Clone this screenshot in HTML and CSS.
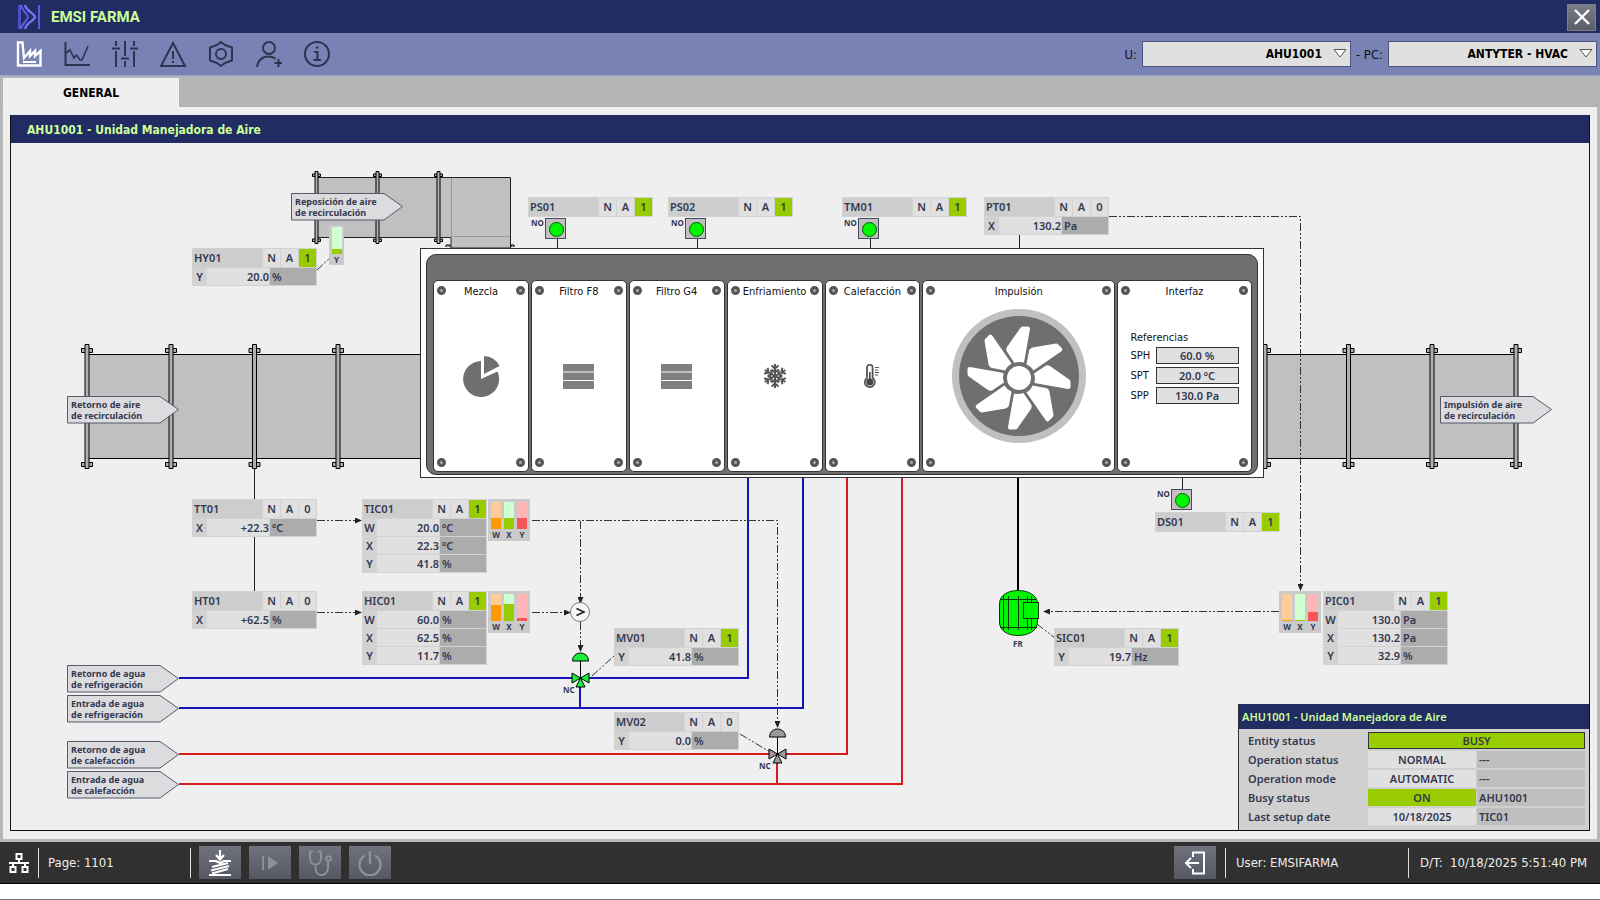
FILE: index.html
```html
<!DOCTYPE html>
<html lang="es">
<head>
    <meta charset="UTF-8">
    <meta name="viewport" content="width=device-width, initial-scale=1.0">
    <title>EMSI FARMA - AHU1001</title>
    <link rel="stylesheet" href="styles.css">
</head>
<body>
    <header class="titlebar">
        <svg class="logo" width="24" height="26" viewBox="0 0 24 26">
            <path d="M1 1H4V25H1Z" fill="#4e50c8"/>
            <path d="M4 1C5 7 11 10 11 13S5 19 4 25" fill="none" stroke="#5a5ce0" stroke-width="2"/>
            <path d="M8 1C9 7 18 10 18 13S9 19 8 25" fill="none" stroke="#7476f0" stroke-width="2.500"/>
            <path d="M22 1V25" fill="none" stroke="#5a5ce0" stroke-width="2"/>
        </svg>
        <h1>EMSI FARMA</h1>
        <button type="button" class="close" aria-label="Close">
            <svg width="16" height="16" viewBox="0 0 16 16"><path d="M1 1L15 15M15 1L1 15" stroke="#fff" stroke-width="2.4"/></svg>
        </button>
    </header>

    <nav class="toolbar">
        <button type="button" class="tool active" aria-label="Plant">
            <svg width="26" height="26" viewBox="0 0 26 26"><path d="M2 24.500V1.500H6.500L8 17L14 10V15L19 10V15L24.500 10V24.500Z" fill="none" stroke="#fff" stroke-width="2.400"/><path d="M7 21H20" stroke="#fff" stroke-width="2"/></svg>
        </button>
        <button type="button" class="tool" aria-label="Trends">
            <svg width="26" height="26" viewBox="0 0 26 26"><path d="M1.500 1V24H26" fill="none" stroke="#2e3350" stroke-width="2"/><path d="M2 12L6 9L10 17L12.500 14L16 19H18L24 5" fill="none" stroke="#2e3350" stroke-width="1.600"/></svg>
        </button>
        <button type="button" class="tool" aria-label="Settings">
            <svg width="26" height="26" viewBox="0 0 26 26" fill="none" stroke="#2e3350" stroke-width="2"><path d="M4 0V5M4 10V26M0 7.500H8M13 0V15M13 20V26M9 17.500H17M22 0V5M22 10V26M18 7.500H26"/></svg>
        </button>
        <button type="button" class="tool" aria-label="Alarms">
            <svg width="26" height="26" viewBox="0 0 26 26" fill="none" stroke="#2e3350" stroke-width="2"><path d="M13 2L25 25H1Z"/><path d="M13 10V18M13 20V22"/></svg>
        </button>
        <button type="button" class="tool" aria-label="Configuration">
            <svg width="26" height="26" viewBox="0 0 26 26" fill="none" stroke="#2e3350" stroke-width="2"><path d="M13 1L17 4L24 6.500V19.500L17 22L13 25L9 22L2 19.500V6.500L9 4Z" stroke-linejoin="round"/><circle cx="13" cy="13" r="5"/></svg>
        </button>
        <button type="button" class="tool" aria-label="Users">
            <svg width="26" height="26" viewBox="0 0 26 26" fill="none" stroke="#2e3350" stroke-width="2"><circle cx="13" cy="7" r="6"/><path d="M1 26C2 19 6 15.500 13 15.500C16 15.500 18 16.500 19.500 18M22.500 18V26M18.500 22H26.500"/></svg>
        </button>
        <button type="button" class="tool" aria-label="Information">
            <svg width="26" height="26" viewBox="0 0 26 26" fill="none" stroke="#2e3350" stroke-width="2"><circle cx="13" cy="13" r="12"/><path d="M10 11H13.500V19M9.500 19H17M12 6.500H14.500"/></svg>
        </button>
        <div class="selectors">
            <label for="unit">U:</label>
            <span class="combo">
                <select id="unit"><option>AHU1001</option></select>
                <svg width="14" height="9" viewBox="0 0 14 9"><path d="M1 .5H13L7 8Z" fill="#fff" stroke="#555" stroke-width="1"/></svg>
            </span>
            <label for="pc">- PC:</label>
            <span class="combo">
                <select id="pc"><option>ANTYTER - HVAC</option></select>
                <svg width="14" height="9" viewBox="0 0 14 9"><path d="M1 .5H13L7 8Z" fill="#fff" stroke="#555" stroke-width="1"/></svg>
            </span>
        </div>
    </nav>

    <div class="tabs">
        <button type="button" class="tab">GENERAL</button>
    </div>

    <main class="workspace">
        <section class="panel">
            <h2>AHU1001 - Unidad Manejadora de Aire</h2>
            <div class="diagram">
                <!-- ducts, pipes and signal lines -->
                <svg class="lines" width="1578" height="687" viewBox="11 143 1578 687">
                    <defs>
                        <g id="flange">
                            <path d="M-5.500 4H5.500V8H-5.500ZM-5.500 118H5.500V122H-5.500Z" fill="#b0b0b0" stroke="#000"/>
                            <path d="M-2 0H2V124H-2Z" fill="#b0b0b0" stroke="#000"/>
                        </g>
                        <g id="flange-small">
                            <path d="M-4 2.500H4V5H-4ZM-4 67.500H4V70H-4Z" fill="#b0b0b0" stroke="#000"/>
                            <path d="M-1.500 0H1.500V72H-1.500Z" fill="#b0b0b0" stroke="#000"/>
                        </g>
                        <path id="arrow-box" d="M.5 .5H93L111.500 13.500L93 27H.5Z" fill="#dcdcde" stroke="#55596a"/>
                        <g id="valve" stroke="#000">
                            <path d="M0 -17V0" />
                            <path d="M-8 -17C-8 -22 -4 -25 0 -25S8 -22 8 -17Z"/>
                            <path d="M-8.500 -5L0 0L-8.500 5ZM8.500 -5L0 0L8.500 5ZM-4.500 9L0 0L4.500 9Z"/>
                        </g>
                        <marker id="tip" viewBox="0 0 7 6" refX="6" refY="3" markerWidth="7" markerHeight="6" markerUnits="userSpaceOnUse" orient="auto"><path d="M0 0L7 3L0 6Z" fill="#222"/></marker>
                    </defs>

                    <!-- ducts -->
                    <path d="M317 177.500H510.500V248H451V237.500H317Z" fill="#c0c0c0" stroke="#222"/>
                    <path d="M451.500 178V237M451 236.500H510" fill="none" stroke="#999"/>
                    <path d="M446 247V245H450V247M511 247V245H514V247" fill="#b0b0b0" stroke="#000"/>
                    <rect x="87" y="354.500" width="334" height="104" fill="#c0c0c0" stroke="#000"/>
                    <rect x="1263" y="354.500" width="254" height="104" fill="#c0c0c0" stroke="#000"/>
                    <use href="#flange-small" x="316.500" y="171.500"/>
                    <use href="#flange-small" x="377.500" y="171.500"/>
                    <use href="#flange-small" x="438.500" y="171.500"/>
                    <use href="#flange" x="87" y="344.500"/>
                    <use href="#flange" x="171" y="344.500"/>
                    <use href="#flange" x="254.500" y="344.500"/>
                    <use href="#flange" x="338" y="344.500"/>
                    <use href="#flange" x="1265" y="344.500"/>
                    <use href="#flange" x="1348.500" y="344.500"/>
                    <use href="#flange" x="1432" y="344.500"/>
                    <use href="#flange" x="1516" y="344.500"/>

                    <!-- water pipes -->
                    <path d="M179 678H748V477M179 708H803V477M580 678V708" class="pipe cold"/>
                    <path d="M179 754H847V477M179 784H902V477M777 754V784" class="pipe hot"/>
                    <path d="M1018 477V592" class="shaft"/>

                    <!-- sensor taps -->
                    <path d="M254.500 468V499M254.500 536V592M557.500 239V249M697.500 239V249M870.500 239V249M1019.500 235V249M1182.500 477V490" stroke="#222" fill="none"/>

                    <!-- signals -->
                    <g class="signal">
                        <path d="M317 520.500H361" marker-end="url(#tip)"/>
                        <path d="M317 612.500H361" marker-end="url(#tip)"/>
                        <path d="M532 520.500H777.500V727" marker-end="url(#tip)"/>
                        <path d="M580.500 521V603" marker-end="url(#tip)"/>
                        <path d="M532 612.500H570" marker-end="url(#tip)"/>
                        <path d="M580.500 622V651" marker-end="url(#tip)"/>
                        <path d="M1109 216.500H1300.500V590" marker-end="url(#tip)"/>
                        <path d="M1279 611.500H1044" marker-end="url(#tip)"/>
                        <path d="M317 270L331 257M592 676L615 655M740 734L770 752M1037 624L1055 638"/>
                    </g>
                    <circle cx="580" cy="612" r="9.500" fill="#f6f6fa" stroke="#777"/>
                    <path d="M576.500 608.500L584 612L576.500 615.500" fill="none" stroke="#222" stroke-width="1.600"/>

                    <use href="#valve" x="580.500" y="678" fill="#19f03c"/>
                    <use href="#valve" x="777.500" y="754" fill="#9a9a9a"/>

                    <!-- fan motor -->
                    <g fill="#00f500" stroke="#0a3a0a">
                        <path d="M999.500 604C999.500 595 1008 590.500 1018 590.500S1037.500 595 1037.500 604V622C1037.500 631 1028 635.500 1018 635.500S999.500 631 999.500 622Z"/>
                        <path d="M1000 599.500H1037M1000 627.500H1037M1003.500 595V630M1008.500 596V630M1018.500 596V630M1027.500 596V630M1031.500 596V630" fill="none"/>
                        <rect x="1023.500" y="602.500" width="15" height="16"/>
                    </g>

                    <use href="#arrow-box" x="291" y="193"/>
                    <use href="#arrow-box" x="67" y="396"/>
                    <use href="#arrow-box" x="1440" y="396"/>
                    <use href="#arrow-box" x="67" y="665"/>
                    <use href="#arrow-box" x="67" y="695"/>
                    <use href="#arrow-box" x="67" y="741"/>
                    <use href="#arrow-box" x="67" y="771"/>
                </svg>

                <p class="flow flow-fresh">Reposición de aire<br>de recirculación</p>
                <p class="flow flow-return">Retorno de aire<br>de recirculación</p>
                <p class="flow flow-supply">Impulsión de aire<br>de recirculación</p>
                <p class="flow flow-cold-out">Retorno de agua<br>de refrigeración</p>
                <p class="flow flow-cold-in">Entrada de agua<br>de refrigeración</p>
                <p class="flow flow-hot-out">Retorno de agua<br>de calefacción</p>
                <p class="flow flow-hot-in">Entrada de agua<br>de calefacción</p>

                <!-- air handling unit -->
                <div class="cabinet">
                    <div class="modules">
                        <article class="module">
                            <h3>Mezcla</h3>
                            <i class="bolt"></i><i class="bolt"></i><i class="bolt"></i><i class="bolt"></i>
                            <svg width="38" height="42" viewBox="0 0 38 42" fill="#6f6f6f"><path d="M19 24V6A18 18 0 1 0 35.500 16.500Z"/><path d="M22 19V1A18 18 0 0 1 37.500 11Z"/></svg>
                        </article>
                        <article class="module">
                            <h3>Filtro F8</h3>
                            <i class="bolt"></i><i class="bolt"></i><i class="bolt"></i><i class="bolt"></i>
                            <svg width="31" height="25" viewBox="0 0 31 25" fill="#808080"><path d="M0 0H31V7.500H0ZM0 8.500H31V16H0ZM0 17H31V25H0Z"/></svg>
                        </article>
                        <article class="module">
                            <h3>Filtro G4</h3>
                            <i class="bolt"></i><i class="bolt"></i><i class="bolt"></i><i class="bolt"></i>
                            <svg width="31" height="25" viewBox="0 0 31 25" fill="#808080"><path d="M0 0H31V7.500H0ZM0 8.500H31V16H0ZM0 17H31V25H0Z"/></svg>
                        </article>
                        <article class="module">
                            <h3>Enfriamiento</h3>
                            <i class="bolt"></i><i class="bolt"></i><i class="bolt"></i><i class="bolt"></i>
                            <svg width="24" height="24" viewBox="-12 -12 24 24" fill="none" stroke="#555" stroke-width="2">
                                <g id="ray"><path d="M0 0V-12M-3.500 -10.500L0 -7.500L3.500 -10.500M-3.500 -6.500L0 -3.500L3.500 -6.500"/></g>
                                <use href="#ray" transform="rotate(60)"/><use href="#ray" transform="rotate(120)"/><use href="#ray" transform="rotate(180)"/><use href="#ray" transform="rotate(240)"/><use href="#ray" transform="rotate(300)"/>
                            </svg>
                        </article>
                        <article class="module">
                            <h3>Calefacción</h3>
                            <i class="bolt"></i><i class="bolt"></i><i class="bolt"></i><i class="bolt"></i>
                            <svg width="16" height="24" viewBox="0 0 16 24"><path d="M3 14V3.500A2.800 2.800 0 0 1 8.600 3.500V14A5 5 0 1 1 3 14Z" fill="#fff" stroke="#555" stroke-width="1.800"/><circle cx="5.800" cy="18" r="3.600" fill="#444"/><path d="M5.800 8V17" stroke="#444" stroke-width="1.600"/><path d="M11 3.500H15M11 6H14M11 8.500H15M11 11H14" stroke="#555"/></svg>
                        </article>
                        <article class="module">
                            <h3>Impulsión</h3>
                            <i class="bolt"></i><i class="bolt"></i><i class="bolt"></i><i class="bolt"></i>
                            <svg width="134" height="134" viewBox="-67 -67 134 134">
                                <circle r="67" fill="#c0c0c0"/>
                                <circle r="60" fill="#6f6f6f"/>
                                <g transform="translate(0 2)" fill="#fff">
                                    <path id="blade" d="M1 -49.500Q2 -51.500 4 -51.500H9Q11 -51.500 11 -49L5 -15.500A15 15 0 0 0 -4.500 -15L-12.500 -27Q-13 -29 -12 -31Z"/>
                                    <use href="#blade" transform="rotate(45)"/><use href="#blade" transform="rotate(90)"/><use href="#blade" transform="rotate(135)"/><use href="#blade" transform="rotate(180)"/><use href="#blade" transform="rotate(225)"/><use href="#blade" transform="rotate(270)"/><use href="#blade" transform="rotate(315)"/>
                                    <circle r="13.500" stroke="#6f6f6f" stroke-width="3"/>
                                </g>
                            </svg>
                        </article>
                        <article class="module">
                            <h3>Interfaz</h3>
                            <i class="bolt"></i><i class="bolt"></i><i class="bolt"></i><i class="bolt"></i>
                            <form class="setpoints">
                                <p>Referencias</p>
                                <label for="sph">SPH</label><input id="sph" type="text" value="60.0 %">
                                <label for="spt">SPT</label><input id="spt" type="text" value="20.0 ºC">
                                <label for="spp">SPP</label><input id="spp" type="text" value="130.0 Pa">
                            </form>
                        </article>
                    </div>
                </div>

                <!-- switches -->
                <div class="switch switch-ps01"><span>NO</span><i></i></div>
                <div class="switch switch-ps02"><span>NO</span><i></i></div>
                <div class="switch switch-tm01"><span>NO</span><i></i></div>
                <div class="switch switch-ds01"><span>NO</span><i></i></div>
                <span class="note note-mv01">NC</span>
                <span class="note note-mv02">NC</span>
                <span class="note note-motor">FR</span>

                <!-- faceplates -->
                <div class="tag tag-hy01">
                    <div class="head"><b>HY01</b><span>N</span><span>A</span><span class="on">1</span></div>
                    <div class="row"><b>Y</b><span>20.0</span><em>%</em></div>
                </div>
                <div class="tag tag-ps01">
                    <div class="head"><b>PS01</b><span>N</span><span>A</span><span class="on">1</span></div>
                </div>
                <div class="tag tag-ps02">
                    <div class="head"><b>PS02</b><span>N</span><span>A</span><span class="on">1</span></div>
                </div>
                <div class="tag tag-tm01">
                    <div class="head"><b>TM01</b><span>N</span><span>A</span><span class="on">1</span></div>
                </div>
                <div class="tag tag-pt01">
                    <div class="head"><b>PT01</b><span>N</span><span>A</span><span>0</span></div>
                    <div class="row"><b>X</b><span>130.2</span><em>Pa</em></div>
                </div>
                <div class="tag tag-tt01">
                    <div class="head"><b>TT01</b><span>N</span><span>A</span><span>0</span></div>
                    <div class="row"><b>X</b><span>+22.3</span><em>ºC</em></div>
                </div>
                <div class="tag tag-ht01">
                    <div class="head"><b>HT01</b><span>N</span><span>A</span><span>0</span></div>
                    <div class="row"><b>X</b><span>+62.5</span><em>%</em></div>
                </div>
                <div class="tag tag-tic01">
                    <div class="head"><b>TIC01</b><span>N</span><span>A</span><span class="on">1</span></div>
                    <div class="row"><b>W</b><span>20.0</span><em>ºC</em></div>
                    <div class="row"><b>X</b><span>22.3</span><em>ºC</em></div>
                    <div class="row"><b>Y</b><span>41.8</span><em>%</em></div>
                </div>
                <div class="tag tag-hic01">
                    <div class="head"><b>HIC01</b><span>N</span><span>A</span><span class="on">1</span></div>
                    <div class="row"><b>W</b><span>60.0</span><em>%</em></div>
                    <div class="row"><b>X</b><span>62.5</span><em>%</em></div>
                    <div class="row"><b>Y</b><span>11.7</span><em>%</em></div>
                </div>
                <div class="tag tag-mv01">
                    <div class="head"><b>MV01</b><span>N</span><span>A</span><span class="on">1</span></div>
                    <div class="row"><b>Y</b><span>41.8</span><em>%</em></div>
                </div>
                <div class="tag tag-mv02">
                    <div class="head"><b>MV02</b><span>N</span><span>A</span><span>0</span></div>
                    <div class="row"><b>Y</b><span>0.0</span><em>%</em></div>
                </div>
                <div class="tag tag-sic01">
                    <div class="head"><b>SIC01</b><span>N</span><span>A</span><span class="on">1</span></div>
                    <div class="row"><b>Y</b><span>19.7</span><em>Hz</em></div>
                </div>
                <div class="tag tag-pic01">
                    <div class="head"><b>PIC01</b><span>N</span><span>A</span><span class="on">1</span></div>
                    <div class="row"><b>W</b><span>130.0</span><em>Pa</em></div>
                    <div class="row"><b>X</b><span>130.2</span><em>Pa</em></div>
                    <div class="row"><b>Y</b><span>32.9</span><em>%</em></div>
                </div>
                <div class="tag tag-ds01">
                    <div class="head"><b>DS01</b><span>N</span><span>A</span><span class="on">1</span></div>
                </div>

                <!-- bar gauges -->
                <div class="gauge gauge-hy01">
                    <div class="bar x"><i style="height: 20%"></i></div><span>Y</span>
                </div>
                <div class="gauge gauge-tic01">
                    <div class="bar w"><i style="height: 40%"></i></div><div class="bar x"><i style="height: 42%"></i></div><div class="bar y"><i style="height: 41.8%"></i></div>
                    <span>W</span><span>X</span><span>Y</span>
                </div>
                <div class="gauge gauge-hic01">
                    <div class="bar w"><i style="height: 60%"></i></div><div class="bar x"><i style="height: 62.5%"></i></div><div class="bar y"><i style="height: 11.7%"></i></div>
                    <span>W</span><span>X</span><span>Y</span>
                </div>
                <div class="gauge gauge-pic01">
                    <div class="bar w"><i style="height: 5%"></i></div><div class="bar x"><i style="height: 5%"></i></div><div class="bar y"><i style="height: 32.9%"></i></div>
                    <span>W</span><span>X</span><span>Y</span>
                </div>

                <aside class="status">
                    <h3>AHU1001 - Unidad Manejadora de Aire</h3>
                    <table>
                        <tr><th>Entity status</th><td colspan="2" class="busy">BUSY</td></tr>
                        <tr><th>Operation status</th><td>NORMAL</td><td class="ref">---</td></tr>
                        <tr><th>Operation mode</th><td>AUTOMATIC</td><td class="ref">---</td></tr>
                        <tr><th>Busy status</th><td class="on">ON</td><td class="ref">AHU1001</td></tr>
                        <tr><th>Last setup date</th><td>10/18/2025</td><td class="ref">TIC01</td></tr>
                    </table>
                </aside>
            </div>
        </section>
    </main>

    <footer class="statusbar">
        <svg class="network" width="20" height="20" viewBox="0 0 20 20" fill="none" stroke="#fff" stroke-width="2"><rect x="7.500" y="1" width="5" height="5"/><path d="M10 6V10M0 10H20M4 10V14M16 10V14"/><rect x="1.500" y="14" width="5" height="5"/><rect x="13.500" y="14" width="5" height="5"/></svg>
        <span class="cell page-no">Page: 1101</span>
        <div class="cell actions">
            <button type="button" aria-label="Acknowledge">
                <svg width="24" height="26" viewBox="0 0 24 26" fill="none" stroke="#fff" stroke-width="2.200"><path d="M12 0V9M8 5L12 9.500L16 5M1 11H8L12 13L16 11H23M4 17L20 13M3 20.500L21 16M4 23.500L20 19M1 25H23"/></svg>
            </button>
            <button type="button" aria-label="Run" disabled>
                <svg width="18" height="16" viewBox="0 0 18 16"><path d="M2 1V15" stroke="#8e8f99" stroke-width="2"/><path d="M7 1L17 8L7 15Z" fill="#8e8f99"/></svg>
            </button>
            <button type="button" aria-label="Diagnostics" disabled>
                <svg width="24" height="26" viewBox="0 0 24 26" fill="none" stroke="#8e8f99" stroke-width="2"><path d="M5 1.500H2V8C2 12 4.500 14.500 7.500 14.500S13 12 13 8V1.500H10M7.500 14.500V18C7.500 22 10 25 13.500 25S20 22 20 18V11"/><circle cx="20.500" cy="8.500" r="2.300"/></svg>
            </button>
            <button type="button" aria-label="Power" disabled>
                <svg width="24" height="26" viewBox="0 0 24 26" fill="none" stroke="#8e8f99" stroke-width="2.400"><path d="M12 1V14M7 5.500A10.500 10.500 0 1 0 17 5.500"/></svg>
            </button>
        </div>
        <button type="button" class="exit" aria-label="Log out">
            <svg width="24" height="24" viewBox="0 0 24 24" fill="none" stroke="#fff" stroke-width="2"><path d="M10 6V1.500H21V22.500H10V18M16 12H3M8 7L3 12L8 17"/></svg>
        </button>
        <span class="cell user">User: EMSIFARMA</span>
        <span class="cell clock">D/T:&nbsp; 10/18/2025 5:51:40 PM</span>
    </footer>
</body>
</html>
```
FILE: styles.css
```css
* {
    box-sizing: border-box;
}
body {
    margin: 0;
    min-height: 100vh;
    display: flex;
    flex-direction: column;
    padding-bottom: 15px;
    border-bottom: 1px solid #777;
    background-color: #fff;
    color: #333850;
    font-family: "DejaVu Sans Condensed", "Noto Sans", sans-serif;
    font-size: 13px;
}
h1, h2, h3, p {
    margin: 0;
}
button, input, select {
    font-family: inherit;
    border-radius: 0;
}
svg {
    display: block;
}

/* title bar */
.titlebar {
    height: 33px;
    padding: 1px 4px 0 17px;
    display: flex;
    align-items: center;
    background-color: #212c62;
}
h1 {
    flex: 1;
    margin-left: 10px;
    color: #ccff99;
    font: bold 15px/20px "Liberation Sans Narrow", Roboto, sans-serif;
}
.close {
    width: 29px;
    height: 27px;
    padding: 0;
    display: grid;
    place-items: center;
    border: 1px solid #7d7f8c;
    background: linear-gradient(#7b7d88, #5b5d68);
}

/* toolbar */
.toolbar {
    height: 43px;
    padding: 0 3px 0 16px;
    display: flex;
    align-items: center;
    gap: 22px;
    background-color: #7882b4;
    border-bottom: 1px solid #9da3c4;
}
.tool {
    padding: 0;
    border: 0;
    background: none;
}
.selectors {
    margin-left: auto;
    display: flex;
    align-items: center;
    gap: 5px;
    color: #111;
}
.combo {
    position: relative;
}
.combo select {
    width: 209px;
    height: 26px;
    padding: 0 28px 0 4px;
    appearance: none;
    border: 1px solid #4f5780;
    background-color: #e0e0e0;
    color: #000;
    font-size: 12px;
    font-weight: bold;
    text-align: right;
    text-align-last: right;
}
.combo svg {
    position: absolute;
    right: 4px;
    top: 8px;
    pointer-events: none;
}

/* tabs */
.tabs {
    height: 31px;
    padding: 2px 0 0 3px;
    display: flex;
    background-color: #b4b4b4;
}
.tab {
    width: 176px;
    padding: 0;
    border: 0;
    background-color: #efefef;
    color: #000;
    font-size: 12px;
    font-weight: bold;
}

.workspace {
    flex: 1;
    padding: 8px 7px;
    display: flex;
    border: solid #b8b8b8;
    border-width: 0 3px 3px;
    background-color: #efefef;
}
.panel {
    flex: 1;
    display: flex;
    flex-direction: column;
    border: 1px solid #111;
    border-top: 0;
}
.panel h2 {
    height: 28px;
    padding-left: 16px;
    background-color: #212c62;
    color: #ccff99;
    font-size: 12px;
    line-height: 30px;
}

/* process diagram */
.diagram {
    position: relative;
    flex: 1;
    min-height: 687px;
    font-family: "Noto Sans", "Open Sans", sans-serif;
    font-size: 11px;
    font-weight: 600;
}
.lines {
    position: absolute;
    left: 0;
    top: 0;
}
.pipe {
    fill: none;
    stroke-width: 2;
}
.cold {
    stroke: #1414b4;
}
.hot {
    stroke: #d41c1c;
}
.shaft {
    stroke: #000;
    stroke-width: 2;
}
.signal path {
    fill: none;
    stroke: #333;
    stroke-dasharray: 8 2 2 2 2 2;
}

.flow {
    position: absolute;
    font-size: 9px;
    font-weight: bold;
    line-height: 11px;
}
.flow-fresh { left: 284px; top: 53px; }
.flow-return { left: 60px; top: 256px; }
.flow-supply { left: 1433px; top: 256px; }
.flow-cold-out { left: 60px; top: 525px; }
.flow-cold-in { left: 60px; top: 555px; }
.flow-hot-out { left: 60px; top: 601px; }
.flow-hot-in { left: 60px; top: 631px; }

.cabinet {
    position: absolute;
    left: 409px;
    top: 105px;
    width: 844px;
    height: 230px;
    padding: 5px;
    border: 1px solid #333;
    background-color: #fff;
}
.modules {
    height: 221px;
    padding: 25px 5px 2px 6px;
    display: grid;
    grid-template-columns: repeat(5, 96fr) 193fr 135fr;
    gap: 2px;
    border: 1px solid #333;
    border-radius: 10px;
    background-color: #6f6f6f;
}
.module {
    position: relative;
    display: grid;
    place-items: center;
    border: 1px solid #333;
    border-radius: 5px;
    background-color: #fff;
    font-family: "DejaVu Sans Condensed", "Noto Sans", sans-serif;
}
.module h3 {
    position: absolute;
    top: 3px;
    left: 0;
    right: 0;
    color: #111;
    font-size: 11px;
    font-weight: normal;
    line-height: 16px;
    text-align: center;
}
.bolt {
    position: absolute;
    width: 9px;
    height: 9px;
    border: 3px solid #555;
    border-radius: 50%;
    background-color: #aaa;
}
.bolt:nth-of-type(1) { left: 3px; top: 5px; }
.bolt:nth-of-type(2) { right: 3px; top: 5px; }
.bolt:nth-of-type(3) { left: 3px; bottom: 4px; }
.bolt:nth-of-type(4) { right: 3px; bottom: 4px; }

.setpoints {
    display: grid;
    grid-template-columns: 21px 83px;
    gap: 3px 4px;
    align-items: center;
    margin-bottom: 18px;
    color: #111;
    font-weight: normal;
}
.setpoints p {
    grid-column: 1 / -1;
    line-height: 13px;
}
.setpoints input {
    width: 83px;
    height: 17px;
    padding: 0;
    border: 1px solid #333;
    background-color: #e0e0e0;
    color: #333850;
    font-family: "Noto Sans", "Open Sans", sans-serif;
    font-size: 11px;
    font-weight: 600;
    text-align: center;
}

.switch {
    position: absolute;
    display: flex;
    gap: 1px;
}
.switch span, .note {
    font-size: 8px;
    font-weight: bold;
    line-height: 10px;
}
.switch i {
    width: 21px;
    height: 21px;
    padding: 3px;
    border: 1px solid #444a60;
    background-color: #c0c0c0;
}
.switch i::before {
    content: "";
    display: block;
    width: 13px;
    height: 13px;
    border: 1px solid #0a5a0a;
    border-radius: 50%;
    background-color: #00f500;
}
.switch-ps01 { left: 520px; top: 75px; }
.switch-ps02 { left: 660px; top: 75px; }
.switch-tm01 { left: 833px; top: 75px; }
.switch-ds01 { left: 1146px; top: 346px; }
.note {
    position: absolute;
}
.note-mv01 { left: 552px; top: 542px; }
.note-mv02 { left: 748px; top: 618px; }
.note-motor { left: 1002px; top: 496px; }

/* faceplate: name, N/A/n flags and one row per variable */
.tag {
    position: absolute;
    width: 125px;
    padding: 1px;
    display: grid;
    gap: 1px;
    background-color: #d2d2d2;
    line-height: 17px;
}
.tag b {
    font-weight: 600;
}
.head {
    height: 18px;
    display: grid;
    grid-template-columns: 1fr 17px 17px 17px;
    gap: 1px;
    text-align: center;
}
.head b {
    padding-left: 1px;
    background-color: #cdcdcd;
    text-align: left;
}
.head span {
    background-color: #e0e0e0;
}
.head .on {
    background-color: #99cc00;
}
.row {
    height: 17px;
    display: grid;
    grid-template-columns: 13px 62px 1fr;
    gap: 1px;
}
.row b {
    text-align: center;
}
.row span {
    background-color: #e0e0e0;
    text-align: right;
}
.row em {
    padding-left: 2px;
    background-color: #acacac;
    font-style: normal;
}
.tag-hy01 { left: 181px; top: 105px; }
.tag-ps01 { left: 517px; top: 54px; }
.tag-ps02 { left: 657px; top: 54px; }
.tag-tm01 { left: 831px; top: 54px; }
.tag-pt01 { left: 973px; top: 54px; }
.tag-tt01 { left: 181px; top: 356px; }
.tag-ht01 { left: 181px; top: 448px; }
.tag-tic01 { left: 351px; top: 356px; }
.tag-hic01 { left: 351px; top: 448px; }
.tag-mv01 { left: 603px; top: 485px; }
.tag-mv02 { left: 603px; top: 569px; }
.tag-sic01 { left: 1043px; top: 485px; }
.tag-pic01 { left: 1312px; top: 448px; }
.tag-ds01 { left: 1144px; top: 369px; }

.gauge {
    position: absolute;
    width: 42px;
    height: 42px;
    padding: 3px 3px 0;
    display: grid;
    grid-template-columns: repeat(3, 10px);
    grid-template-rows: 27px 11px;
    justify-content: space-between;
    background-color: #cacaca;
    font-size: 8px;
    font-weight: bold;
    line-height: 12px;
    text-align: center;
}
.gauge-hy01 {
    left: 318px;
    top: 82px;
    width: 15px;
    height: 40px;
    padding-top: 2px;
    grid-template-columns: 10px;
    justify-content: center;
}
.gauge-tic01 { left: 477px; top: 356px; }
.gauge-hic01 { left: 477px; top: 448px; }
.gauge-pic01 { left: 1268px; top: 448px; }
.bar {
    display: flex;
    align-items: flex-end;
}
.bar i {
    width: 100%;
}
.bar.w { background-color: #ffcc99; }
.bar.w i { background-color: #ff9900; }
.bar.x { background-color: #d0ffd0; }
.bar.x i { background-color: #99cc00; }
.bar.y { background-color: #ffb6b6; }
.bar.y i { background-color: #fa5555; }

/* entity status box */
.status {
    position: absolute;
    right: 0;
    bottom: 0;
    width: 351px;
    height: 126px;
    border-left: 1px solid #333;
    background-color: #d0d0d0;
}
.status h3 {
    height: 25px;
    padding-left: 3px;
    background-color: #212c62;
    color: #ccff99;
    font-size: 11px;
    font-weight: 600;
    line-height: 25px;
}
.status table {
    width: 100%;
    padding: 1px 3px 0 8px;
    border-collapse: separate;
    border-spacing: 1px 2px;
    table-layout: fixed;
}
.status th, .status td {
    height: 17px;
    padding: 0;
    font-weight: 600;
    line-height: 15px;
}
.status th {
    width: 119px;
    text-align: left;
}
.status td {
    background-color: #e0e0e0;
    text-align: center;
}
.status .ref {
    padding-left: 2px;
    background-color: #bebebe;
    text-align: left;
}
.status .on, .status .busy {
    background-color: #99cc00;
}
.status .busy {
    border: 1px solid #333;
}

/* bottom bar */
.statusbar {
    height: 42px;
    padding: 0 12px 0 9px;
    display: flex;
    align-items: center;
    background-color: #303030;
    border-bottom: 1px solid #000;
    color: #eee;
}
.cell {
    height: 30px;
    border-left: 1px solid #ddd;
    line-height: 30px;
}
.page-no {
    width: 152px;
    margin-left: 9px;
    padding-left: 9px;
}
.actions {
    padding-left: 8px;
    display: flex;
    align-items: center;
    gap: 8px;
}
.statusbar button {
    width: 42px;
    height: 33px;
    padding: 0;
    display: grid;
    place-items: center;
    border: 0;
    background: linear-gradient(#70727d, #555762);
}
.statusbar .exit {
    margin-left: auto;
}
.user {
    width: 183px;
    margin-left: 9px;
    padding-left: 10px;
}
.clock {
    min-width: 180px;
    padding-left: 11px;
}
```
